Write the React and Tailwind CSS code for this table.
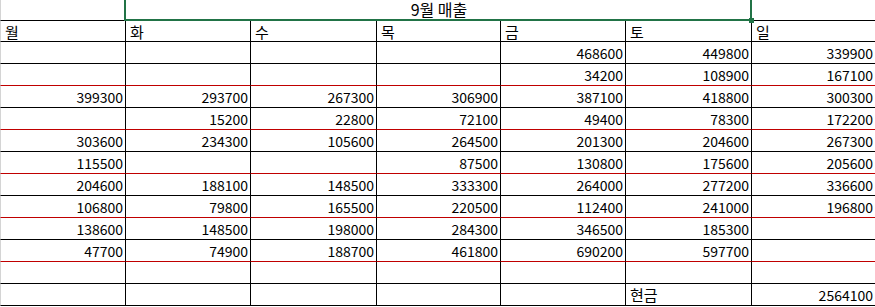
const cols = ['w-[126px] border-l border-l-[#d4d4d4]', 'w-[125px]', 'w-[126px]', 'w-[124px]', 'w-[125px]', 'w-[126px]', 'w-[123px]'];

const days = ['월', '화', '수', '목', '금', '토', '일'];

const rows = [
  { red: false, cells: ['', '', '', '', '468600', '449800', '339900'] },
  { red: true, cells: ['', '', '', '', '34200', '108900', '167100'] },
  { red: false, cells: ['399300', '293700', '267300', '306900', '387100', '418800', '300300'] },
  { red: true, cells: ['', '15200', '22800', '72100', '49400', '78300', '172200'] },
  { red: false, cells: ['303600', '234300', '105600', '264500', '201300', '204600', '267300'] },
  { red: true, cells: ['115500', '', '', '87500', '130800', '175600', '205600'] },
  { red: false, cells: ['204600', '188100', '148500', '333300', '264000', '277200', '336600'] },
  { red: true, cells: ['106800', '79800', '165500', '220500', '112400', '241000', '196800'] },
  { red: false, cells: ['138600', '148500', '198000', '284300', '346500', '185300', ''] },
  { red: true, cells: ['47700', '74900', '188700', '461800', '690200', '597700', ''] },
  { red: false, cells: ['', '', '', '', '', '', ''] },
  { red: false, cells: ['', '', '', '', '', '현금', '2564100'], label: 5 },
];

const Cell = ({ i, children, left = false, red = false, h = 'h-[22px]' }) => (
  <div
    className={`${cols[i]} ${h} shrink-0 flex items-center border-b ${
      red ? 'border-b-[#c00000]' : 'border-b-black'
    } ${i < 6 ? 'border-r border-r-black' : ''} ${
      left ? 'justify-start pl-[4px] text-[15px]' : 'justify-end pr-[2px]'
    }`}
  >
    <span className="leading-none">{children}</span>
  </div>
);

export default function App() {
  return (
    <div
      className="relative w-[875px] h-[307px] bg-white text-black text-[14px] overflow-hidden"
      style={{ fontFamily: '"Noto Sans CJK KR", "Noto Sans", sans-serif' }}
    >
      {/* title row */}
      <div className="flex h-[21px]">
        <div className="w-[126px] border-l border-l-[#d4d4d4] border-b border-b-black" />
        <div className="w-[626px] flex items-center justify-center pb-[2px]">
          <span className="text-[16px] leading-[17px]">9월 매출</span>
        </div>
        <div className="w-[123px] border-b border-b-black" />
      </div>
      <div className="absolute left-[124px] top-[-2px] w-[628px] h-[23px] border-2 border-[#217346] pointer-events-none" />
      <div className="absolute left-[749px] top-[18px] w-[5px] h-[5px] bg-[#217346]" />

      {/* header */}
      <div className="flex">
        {days.map((d, i) => (
          <Cell key={d} i={i} left h="h-[21px]">
            {d}
          </Cell>
        ))}
      </div>

      {rows.map((r, ri) => (
        <div key={ri} className="flex">
          {r.cells.map((c, i) => (
            <Cell key={i} i={i} red={r.red} left={r.label === i}>
              {c}
            </Cell>
          ))}
        </div>
      ))}
    </div>
  );
}
